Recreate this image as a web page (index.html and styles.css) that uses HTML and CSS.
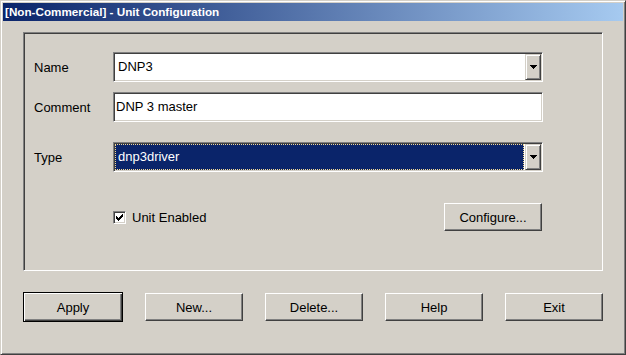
FILE: index.html
```html
<!DOCTYPE html>
<html lang="en">
<head>
    <meta charset="UTF-8">
    <title>Unit Configuration</title>
    <link rel="stylesheet" href="styles.css">
</head>
<body>

<div class="window">
    <!-- Title bar -->
    <div class="titlebar">
        <span class="title">[Non-Commercial] - Unit Configuration</span>
    </div>

    <div class="client">
        <!-- Unit settings -->
        <div class="group">
            <div class="row row-name">
                <label class="label">Name</label>
                <div class="combo">
                    <span class="value value-name">DNP3</span>
                    <div class="drop">
                        <svg width="7" height="4" viewBox="0 0 7 4"><path d="M0 0h7v1H0z M1 1h5v1H1z M2 2h3v1H2z M3 3h1v1H3z" fill="#000"/></svg>
                    </div>
                </div>
            </div>

            <div class="row row-comment">
                <label class="label">Comment</label>
                <div class="combo">
                    <span class="value value-comment">DNP 3 master</span>
                </div>
            </div>

            <div class="row row-type">
                <label class="label">Type</label>
                <div class="combo">
                    <span class="value value-type selected">dnp3driver</span>
                    <div class="drop">
                        <svg width="7" height="4" viewBox="0 0 7 4"><path d="M0 0h7v1H0z M1 1h5v1H1z M2 2h3v1H2z M3 3h1v1H3z" fill="#000"/></svg>
                    </div>
                </div>
            </div>

            <div class="row row-options">
                <div class="check-wrap">
                    <div class="checkbox">
                        <svg width="7" height="7" viewBox="0 0 7 7"><path d="M6 0h1v3H6z M5 1h1v3H5z M4 2h1v3H4z M0 2h1v3H0z M1 3h1v3H1z M2 4h1v3H2z M3 3h1v3H3z" fill="#000"/></svg>
                    </div>
                    <span class="check-label">Unit Enabled</span>
                </div>
                <button class="btn btn-configure">Configure...</button>
            </div>
        </div>

        <!-- Dialog buttons -->
        <div class="buttons">
            <button class="btn btn-default">Apply</button>
            <button class="btn">New...</button>
            <button class="btn">Delete...</button>
            <button class="btn">Help</button>
            <button class="btn">Exit</button>
        </div>
    </div>
</div>

</body>
</html>
```

FILE: styles.css
```css
/* Basis */
body {
    margin: 0;
    padding: 0;
    background-color: #d4d0c8;
    font-family: "Liberation Sans", Arial, sans-serif;
    font-size: 13px;
    color: #000;
}

/* Window frame */
.window {
    width: 626px;
    height: 355px;
    box-sizing: border-box;
    border: 1px solid;
    border-color: #d4d0c8 #404040 #404040 #d4d0c8;
    box-shadow: inset 1px 1px #fff, inset -1px -1px #808080;
    padding: 2px;
    background-color: #d4d0c8;
}

.titlebar {
    height: 18px;
    background: linear-gradient(to right, #0a246a, #a6caf0);
    padding-left: 2px;
}

.title {
    color: #fff;
    font-weight: bold;
    font-size: 11.7px;
    line-height: 18px;
}

.client {
    padding: 11px 20px 0 20px;
}

/* Group box */
.group {
    height: 239px;
    box-sizing: border-box;
    border: 1px solid;
    border-color: #808080 #fff #fff #808080;
    box-shadow: inset 1px 1px #404040, inset -1px -1px #d4d0c8;
    padding: 19px 0 0 10px;
}

.row {
    display: flex;
    align-items: center;
}

.row-name {
    margin-bottom: 10px;
}

.row-comment {
    margin-bottom: 20px;
}

.row-type {
    margin-bottom: 31px;
}

.label {
    width: 79px;
}

/* Combo / edit field */
.combo {
    width: 430px;
    height: 30px;
    box-sizing: border-box;
    border: 1px solid;
    border-color: #808080 #fff #fff #808080;
    box-shadow: inset 1px 1px #404040, inset -1px -1px #d4d0c8;
    padding: 1px;
    background-color: #fff;
    display: flex;
}

.value {
    flex: 1;
    line-height: 26px;
}

.value-name, .value-type {
    padding-left: 3px;
}

.value-comment {
    padding-left: 1px;
}

.selected {
    background-color: #0a246a;
    color: #fff;
    outline: 1px dotted #f5db95;
    outline-offset: -1px;
    margin-right: 1px;
}

.drop {
    width: 16px;
    height: 26px;
    box-sizing: border-box;
    border: 1px solid;
    border-color: #d4d0c8 #404040 #404040 #d4d0c8;
    box-shadow: inset 1px 1px #fff, inset -1px -1px #808080;
    background-color: #d4d0c8;
    display: flex;
    justify-content: center;
    align-items: center;
}

.drop svg {
    display: block;
}

/* Checkbox row */
.row-options {
    height: 28px;
    padding-left: 79px;
    width: 429px;
    justify-content: space-between;
}

.check-wrap {
    display: flex;
    align-items: center;
}

.checkbox {
    width: 13px;
    height: 13px;
    box-sizing: border-box;
    border: 1px solid;
    border-color: #808080 #fff #fff #808080;
    box-shadow: inset 1px 1px #404040, inset -1px -1px #d4d0c8;
    background-color: #fff;
    display: flex;
    justify-content: center;
    align-items: center;
}

.checkbox svg {
    display: block;
}

.check-label {
    margin-left: 6px;
}

/* Buttons */
.btn {
    width: 98px;
    height: 28px;
    box-sizing: border-box;
    border: 1px solid;
    border-color: #fff #404040 #404040 #fff;
    box-shadow: inset -1px -1px #808080;
    background-color: #d4d0c8;
    font-family: "Liberation Sans", Arial, sans-serif;
    font-size: 13px;
    color: #000;
    padding: 0;
    border-radius: 0;
}

.btn-default {
    width: 100px;
    height: 30px;
    border-color: #000;
    box-shadow: inset 1px 1px #fff, inset -1px -1px #404040, inset -2px -2px #808080;
}

.buttons {
    margin-top: 21px;
    height: 30px;
    display: flex;
    justify-content: space-between;
    align-items: center;
}
```
